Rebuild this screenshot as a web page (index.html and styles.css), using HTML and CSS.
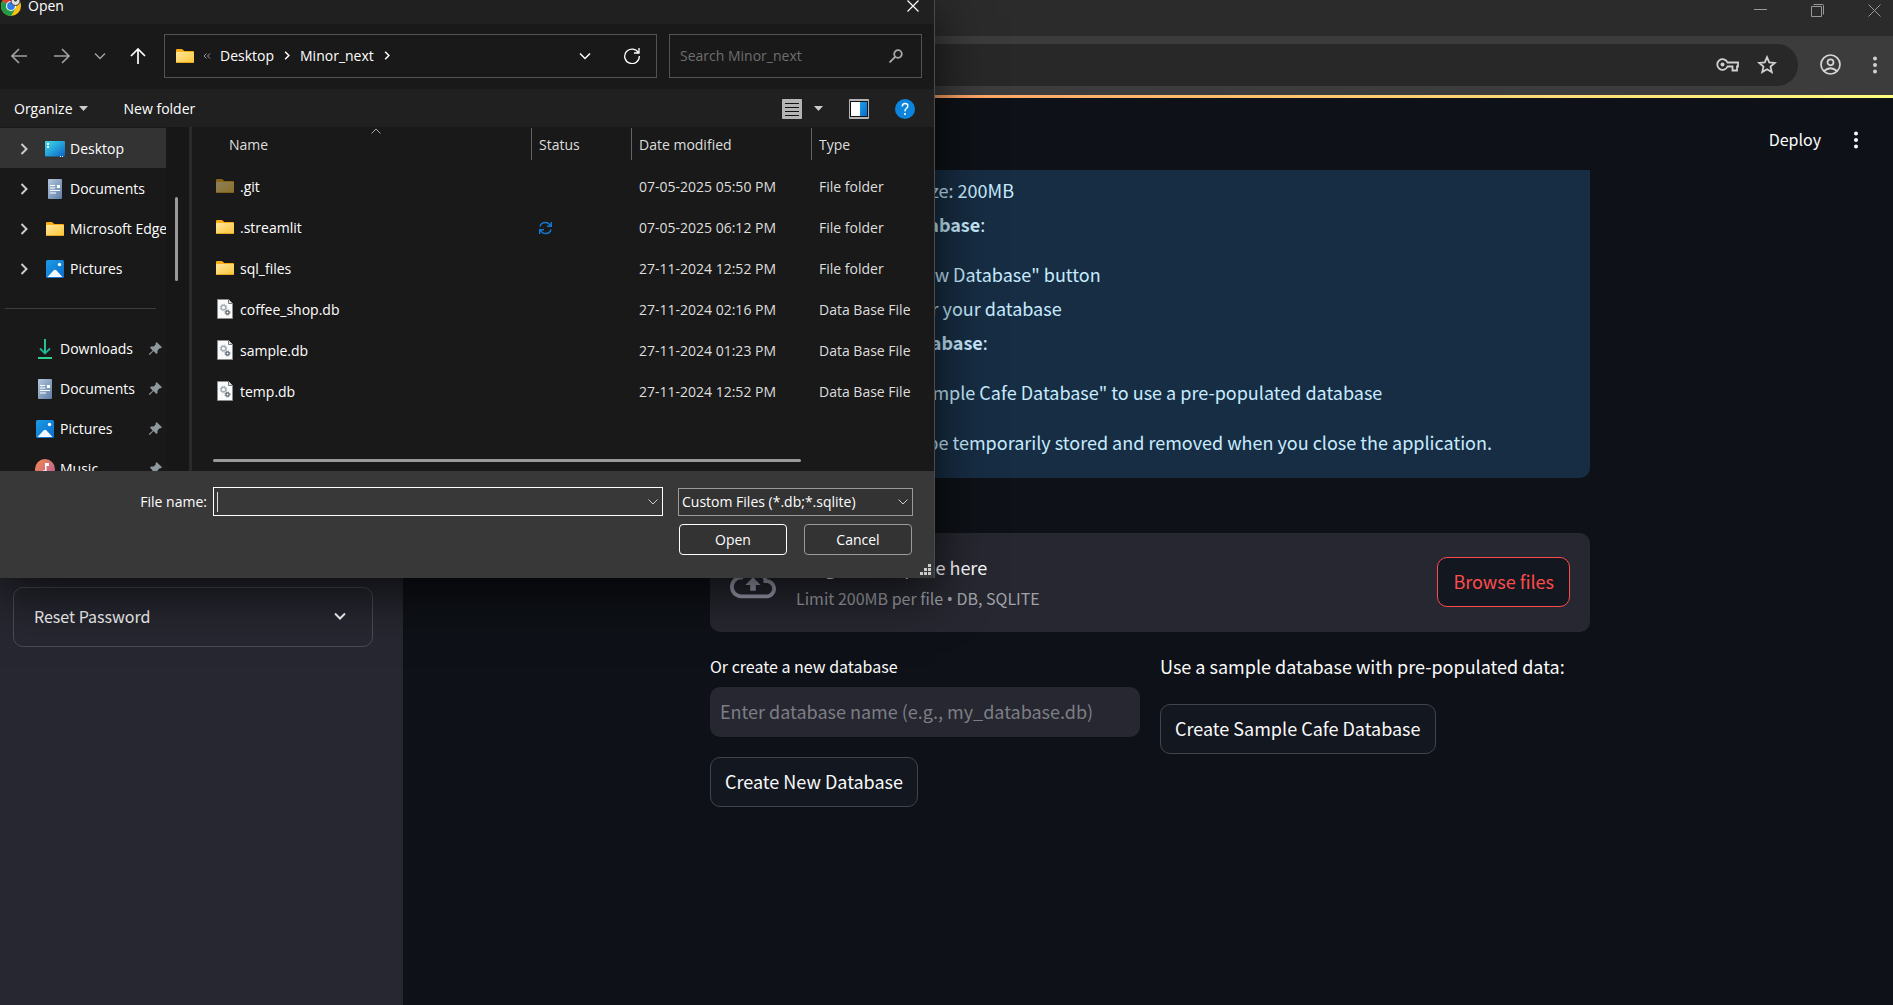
FILE: index.html
```html
<!DOCTYPE html>
<html lang="en">
<head>
<meta charset="utf-8">
<title>Database manager</title>
<link rel="stylesheet" href="styles.css">
</head>
<body>
<svg class="defs" width="0" height="0" aria-hidden="true">
  <defs>
    <linearGradient id="g-folder" x1="0" y1="0" x2="1" y2="1"><stop offset="0" stop-color="#ffe7a0"/><stop offset="1" stop-color="#fcc533"/></linearGradient>
    <linearGradient id="g-desk" x1="0" y1="0" x2="1" y2="1"><stop offset="0" stop-color="#3fdde8"/><stop offset="1" stop-color="#0a64c8"/></linearGradient>
    <linearGradient id="g-doc" x1="0" y1="0" x2="1" y2="1"><stop offset="0" stop-color="#b4c6dc"/><stop offset="1" stop-color="#5d7ea6"/></linearGradient>
    <linearGradient id="g-pic" x1="0" y1="0" x2="1" y2="1"><stop offset="0" stop-color="#1c9ce8"/><stop offset="1" stop-color="#0a6ccb"/></linearGradient>
    <linearGradient id="g-music" x1="0" y1="0" x2="1" y2="1"><stop offset="0" stop-color="#f58a4c"/><stop offset="1" stop-color="#b8589c"/></linearGradient>
    <linearGradient id="g-down" x1="0" y1="0" x2="0" y2="1"><stop offset="0" stop-color="#2fd08a"/><stop offset="1" stop-color="#1aa698"/></linearGradient>
    <symbol id="i-folder" viewBox="0 0 18 14"><path d="M0 1a1 1 0 0 1 1-1h5l2 2h9a1 1 0 0 1 1 1v3H0z" fill="#f8ac10"/><rect y="3" width="18" height="11" rx="1" fill="url(#g-folder)"/><path d="M0 2h7l1-1H0z" fill="#f8ac10"/><path d="M0 3h7l1-1H0z" fill="#fbb51c"/><path d="M1 13.500h16" stroke="#e9a820"/></symbol>
    <symbol id="i-desktop" viewBox="0 0 20 16"><rect width="20" height="15.500" rx="1" fill="url(#g-desk)"/><path d="M2 2h2v2H2zM2 5h2v2H2z" fill="#fff"/><path d="M15 15h1v1h-1zM17 15h1v1h-1z" fill="#d9f4ff"/></symbol>
    <symbol id="i-doc" viewBox="0 0 14 20"><rect width="14" height="20" rx="1" fill="url(#g-doc)"/><path d="M2 6.500h5M2 9h5M2 11.500h10M2 14h6" stroke="#fff" stroke-width="1.200"/><rect x="9" y="6" width="3" height="3" fill="#fff"/></symbol>
    <symbol id="i-pic" viewBox="0 0 18 18"><rect width="18" height="18" rx="1.500" fill="url(#g-pic)"/><circle cx="13.500" cy="4.500" r="1.700" fill="#fff"/><path d="M1.500 17l6-6.500q1.500-1.500 3 0l6 6.500z" fill="#f2f8ff"/></symbol>
    <symbol id="i-down" viewBox="0 0 14 20"><path d="M7 0v14M2 9.500l5 5 5-5" fill="none" stroke="url(#g-down)" stroke-width="1.800"/><path d="M6.200 0h1.600v14H6.200z" fill="#2cc58d"/><path d="M0 18h14v2H0z" fill="#2bd291"/></symbol>
    <symbol id="i-music" viewBox="0 0 20 20"><circle cx="10" cy="10" r="10" fill="url(#g-music)"/><path d="M10 4h4v3h-2.500v6.500a2.300 2.300 0 1 1-1.500-2.100z" fill="#fff"/></symbol>
    <symbol id="i-pin" viewBox="0 0 13 13"><path d="M7.500 0l5.500 5.300-1.300.9-1 .1-2.200 2.200v2.500L7.300 12 4.500 9 1 12.700H0V12l3.700-3.500L1 5.700l1-1.200h2.600L6.700 2.400V1z" fill="#8d989f"/></symbol>
    <symbol id="i-db" viewBox="0 0 16 20"><path d="M.5.500h11l4 4v15H.5z" fill="#fafafa" stroke="#8c8c8c"/><path d="M11.500.500v4h4" fill="#ddd" stroke="#777"/><circle cx="6.500" cy="8.500" r="2.300" fill="none" stroke="#a3adb5" stroke-width="1.400"/><circle cx="6.500" cy="8.500" r="3.300" fill="none" stroke="#a3adb5" stroke-width="1" stroke-dasharray="1.300 1.300"/><circle cx="10.500" cy="13.500" r="1.600" fill="none" stroke="#59636b" stroke-width="1.200"/><circle cx="10.500" cy="13.500" r="2.500" fill="none" stroke="#59636b" stroke-width="1" stroke-dasharray="1 1"/></symbol>
    <symbol id="i-right" viewBox="0 0 8 12"><path d="M1.500 1l5 5-5 5" fill="none" stroke="currentColor" stroke-width="2"/></symbol>
    <symbol id="i-chev" viewBox="0 0 12 8"><path d="M1 1.500l5 5 5-5" fill="none" stroke="currentColor" stroke-width="1.500"/></symbol>
    <symbol id="i-arrow" viewBox="0 0 16 16"><path d="M16 8H1M8 1L1 8l7 7" fill="none" stroke="currentColor" stroke-width="1.700"/></symbol>
    <symbol id="i-dots" viewBox="0 0 6 18"><g fill="currentColor"><circle cx="3" cy="2.500" r="2"/><circle cx="3" cy="9" r="2"/><circle cx="3" cy="15.500" r="2"/></g></symbol>
  </defs>
</svg>

<div class="browser">
  <div class="tabstrip">
    <button class="bare" aria-label="Minimize"><svg width="13" height="13"><path d="M0 5.500h13" stroke="#9a9a9a"/></svg></button>
    <button class="bare" aria-label="Restore"><svg width="13" height="13" fill="none" stroke="#9a9a9a"><path d="M.5 2.500h10v10H.5z"/><path d="M2.500.500h9a1 1 0 0 1 1 1v9"/></svg></button>
    <button class="bare" aria-label="Close window"><svg width="13" height="13"><path d="M.5.500l12 12M12.500.500l-12 12" stroke="#9a9a9a"/></svg></button>
  </div>
  <div class="toolbar">
    <div class="omnibox">
      <button class="bare" aria-label="Passwords"><svg width="23" height="14" viewBox="0 0 23 14" fill="none" stroke="#d0d0d0" stroke-width="1.800"><path d="M11.500 4.500h10.500v4h-1v4h-4.500v-4h-5a5.300 5.300 0 1 1 0-4z"/><circle cx="6.500" cy="6.500" r="2" fill="#d0d0d0" stroke="none"/></svg></button>
      <button class="bare" aria-label="Bookmark"><svg width="20" height="19" viewBox="0 0 20 19" fill="none" stroke="#d0d0d0" stroke-width="1.800"><path d="M10 2.200l2.200 5.200 5.600.5-4.300 3.700 1.300 5.500L10 14.200l-4.800 2.900 1.300-5.500L2.200 7.900l5.600-.5z"/></svg></button>
    </div>
    <button class="bare" aria-label="Profile"><svg width="21" height="21" viewBox="0 0 21 21" fill="none" stroke="#d6d6d6" stroke-width="1.700"><circle cx="10.500" cy="10.500" r="9.500"/><circle cx="10.500" cy="8.300" r="3"/><path d="M4 17q6.500-5.500 13 0"/></svg></button>
    <button class="bare dim" aria-label="Browser menu"><svg width="6" height="18"><use href="#i-dots"/></svg></button>
  </div>
</div>

<div class="app">
  <aside class="sidebar">
    <details class="expander">
      <summary>Reset Password<svg width="12" height="8"><path d="M1 1.500l5 5 5-5" fill="none" stroke="#fff" stroke-width="2"/></svg></summary>
    </details>
  </aside>
  <main class="main">
    <header class="header">
      <button class="bare deploy">Deploy</button>
      <button class="bare" aria-label="Main menu"><svg width="6" height="18"><use href="#i-dots"/></svg></button>
    </header>
    <div class="block">
      <section class="info">
        <p class="sub">Maximum file size: 200MB</p>
        <p class="item"><b>Create a New Database</b>:</p>
        <p class="sub gap">Click "Create New Database" button</p>
        <p class="sub">Enter a name for your database</p>
        <p class="item"><b>Use a Sample Database</b>:</p>
        <p class="sub gap">Click "Create Sample Cafe Database" to use a pre-populated database</p>
        <p class="gap">Note: All databases will be temporarily stored and removed when you close the application.</p>
      </section>
      <section class="upload">
        <svg width="46" height="46" viewBox="0 0 24 24" aria-hidden="true"><path fill="#a3a8b8" d="M19.350 10.040C18.670 6.590 15.640 4 12 4 9.110 4 6.600 5.640 5.350 8.040 2.340 8.360 0 10.910 0 14c0 3.310 2.690 6 6 6h13c2.760 0 5-2.240 5-5 0-2.640-2.050-4.780-4.650-4.960zM19 18H6c-2.210 0-4-1.790-4-4s1.790-4 4-4h.71C7.370 7.690 9.480 6 12 6c3.040 0 5.500 2.460 5.500 5.500v.5H19c1.660 0 3 1.340 3 3s-1.340 3-3 3zM8 13h2.550v3h2.900v-3H16l-4-4z"/></svg>
        <div class="upload-text"><span>Drag and drop file here</span><small>Limit 200MB per file <span class="bullet">•</span> DB, SQLITE</small></div>
        <button class="btn red">Browse files</button>
      </section>
      <div class="columns">
        <div class="column">
          <label for="dbname">Or create a new database</label>
          <input id="dbname" class="text" type="text" placeholder="Enter database name (e.g., my_database.db)">
          <button class="btn">Create New Database</button>
        </div>
        <div class="column second">
          <p>Use a sample database with pre-populated data:</p>
          <button class="btn">Create Sample Cafe Database</button>
        </div>
      </div>
    </div>
  </main>
</div>

<div class="dialog" role="dialog" aria-label="Open">
  <div class="titlebar">
    <svg width="20" height="20" viewBox="0 0 20 20"><circle cx="10" cy="10" r="10" fill="#fbc116"/><path d="M10 10L1.340 5A10 10 0 0 1 18.660 5z" fill="#e33b2e"/><path d="M1.340 5A10 10 0 0 0 10 20l4.500-7.500L10 10z" fill="#229a48"/><circle cx="10" cy="10" r="5" fill="#fff"/><circle cx="10" cy="10" r="3.900" fill="#2f7de9"/><circle cx="14.500" cy="5" r="4.500" fill="#ddd" stroke="#333"/><circle cx="14.500" cy="4" r="1.500" fill="#333"/></svg>
    <span>Open</span>
    <button class="bare push" aria-label="Close"><svg width="12" height="12"><path d="M.5.500l11 11M11.500.500l-11 11" stroke="#fff" stroke-width="1.200"/></svg></button>
  </div>
  <div class="navbar">
    <div class="nav-buttons">
      <button class="bare" aria-label="Back"><svg class="grey" width="16" height="16"><use href="#i-arrow"/></svg></button>
      <button class="bare" aria-label="Forward"><svg class="grey flip" width="16" height="16"><use href="#i-arrow"/></svg></button>
      <button class="bare" aria-label="Recent"><svg class="grey" width="12" height="8"><use href="#i-chev"/></svg></button>
      <button class="bare" aria-label="Up"><svg class="up" width="16" height="16"><use href="#i-arrow"/></svg></button>
    </div>
    <div class="address">
      <svg width="18" height="14"><use href="#i-folder"/></svg>
      <svg width="8" height="6" fill="none" stroke="#9a9a9a"><path d="M3.500.500L1 3l2.500 2.500M7 .5L4.500 3 7 5.500"/></svg>
      <a href="#desktop">Desktop</a>
      <svg class="sep" width="6" height="9"><use href="#i-right"/></svg>
      <a href="#minor">Minor_next</a>
      <svg class="sep" width="6" height="9"><use href="#i-right"/></svg>
      <button class="bare push" aria-label="Previous locations"><svg width="12" height="8"><use href="#i-chev"/></svg></button>
      <button class="bare" aria-label="Refresh"><svg width="16" height="17" viewBox="0 0 16 17" fill="none" stroke="#fff" stroke-width="1.300"><path d="M14.500 6A7.300 7.300 0 1 0 15.300 9M15 1v5h-5"/></svg></button>
    </div>
    <div class="search">
      <input type="search" aria-label="Search" placeholder="Search Minor_next">
      <svg width="14" height="14" fill="none" stroke="#a8a8a8" stroke-width="1.800"><circle cx="9" cy="5" r="3.800"/><path d="M6.500 7.500l-6 6"/></svg>
    </div>
  </div>
  <div class="commands">
    <button class="bare">Organize<svg width="9" height="5"><path d="M0 0h9L4.500 5z" fill="#ccc"/></svg></button>
    <button class="bare">New folder</button>
    <button class="bare push" aria-label="View"><svg width="20" height="20"><rect width="20" height="20" rx="1" fill="#b4b4b4"/><path d="M3 4.500h14M3 8.500h14M3 12.500h14M3 16.500h14" stroke="#111"/></svg><svg width="9" height="5"><path d="M0 0h9L4.500 5z" fill="#ccc"/></svg></button>
    <button class="bare" aria-label="Preview pane"><svg width="20" height="20"><rect width="20" height="20" rx="1" fill="#b4b4b4"/><path d="M1 2h18v16H1z" fill="#111"/><path d="M2 3h9v14H2z" fill="#fff"/><path d="M11 3h7v14h-7z" fill="url(#g-pic)"/></svg></button>
    <button class="bare" aria-label="Help"><svg width="20" height="20"><circle cx="10" cy="10" r="10" fill="#0c84dc"/><path d="M7.300 7.500q0-3 2.800-3t2.700 2.600q0 1.400-1.500 2.400T10 12.300" fill="none" stroke="#fff" stroke-width="1.500"/><circle cx="10" cy="15" r="1.100" fill="#fff"/></svg></button>
  </div>
  <div class="browse">
    <nav class="tree">
      <a class="selected" href="#d"><svg class="tw" width="8" height="12"><use href="#i-right"/></svg><i><svg width="20" height="16"><use href="#i-desktop"/></svg></i>Desktop</a>
      <a href="#docs"><svg class="tw" width="8" height="12"><use href="#i-right"/></svg><i><svg width="14" height="20"><use href="#i-doc"/></svg></i>Documents</a>
      <a href="#edge"><svg class="tw" width="8" height="12"><use href="#i-right"/></svg><i><svg width="18" height="14"><use href="#i-folder"/></svg></i>Microsoft Edge</a>
      <a href="#pics"><svg class="tw" width="8" height="12"><use href="#i-right"/></svg><i><svg width="18" height="18"><use href="#i-pic"/></svg></i>Pictures</a>
      <hr>
      <a class="quick" href="#q1"><i><svg width="14" height="20"><use href="#i-down"/></svg></i>Downloads<svg class="push" width="13" height="13"><use href="#i-pin"/></svg></a>
      <a class="quick" href="#q2"><i><svg width="14" height="20"><use href="#i-doc"/></svg></i>Documents<svg class="push" width="13" height="13"><use href="#i-pin"/></svg></a>
      <a class="quick" href="#q3"><i><svg width="18" height="18"><use href="#i-pic"/></svg></i>Pictures<svg class="push" width="13" height="13"><use href="#i-pin"/></svg></a>
      <a class="quick" href="#q4"><i><svg width="20" height="20"><use href="#i-music"/></svg></i>Music<svg class="push" width="13" height="13"><use href="#i-pin"/></svg></a>
    </nav>
    <div class="gutter"><div class="vthumb"></div></div>
    <div class="files">
      <table>
        <colgroup><col class="c-name"><col class="c-status"><col class="c-date"><col></colgroup>
        <thead><tr><th><svg class="sort" width="10" height="6" fill="none" stroke="#aaa"><path d="M.5 5.500L5 1l4.500 4.500"/></svg><span>Name</span></th><th><span>Status</span></th><th><span>Date modified</span></th><th><span>Type</span></th></tr></thead>
        <tbody>
          <tr><td><div><svg class="faded" width="18" height="14"><use href="#i-folder"/></svg>.git</div></td><td></td><td>07-05-2025 05:50 PM</td><td>File folder</td></tr>
          <tr><td><div><svg width="18" height="14"><use href="#i-folder"/></svg>.streamlit</div></td><td><svg width="13" height="14" viewBox="0 0 13 14" fill="none" stroke="#1278cf" stroke-width="1.400"><path d="M1 5.500Q2 1.500 6.500 1.500 10 1.500 11.500 5M12.300 1v4.300H8M12 8.500q-1 4-5.500 4Q3 12.500 1.500 9M.7 13V8.700H5"/></svg></td><td>07-05-2025 06:12 PM</td><td>File folder</td></tr>
          <tr><td><div><svg width="18" height="14"><use href="#i-folder"/></svg>sql_files</div></td><td></td><td>27-11-2024 12:52 PM</td><td>File folder</td></tr>
          <tr><td><div><svg width="18" height="20"><use href="#i-db"/></svg>coffee_shop.db</div></td><td></td><td>27-11-2024 02:16 PM</td><td>Data Base File</td></tr>
          <tr><td><div><svg width="18" height="20"><use href="#i-db"/></svg>sample.db</div></td><td></td><td>27-11-2024 01:23 PM</td><td>Data Base File</td></tr>
          <tr><td><div><svg width="18" height="20"><use href="#i-db"/></svg>temp.db</div></td><td></td><td>27-11-2024 12:52 PM</td><td>Data Base File</td></tr>
        </tbody>
      </table>
      <div class="hthumb"></div>
    </div>
  </div>
  <div class="footer">
    <label for="fname">File name:</label>
    <div class="combo"><input id="fname" type="text"><span class="caret"></span><svg width="10" height="6"><path d="M.5.500L5 5 9.500.500" fill="none" stroke="#ccc"/></svg></div>
    <div class="type"><select aria-label="File type"><option>Custom Files (*.db;*.sqlite)</option></select><svg width="10" height="6"><path d="M.5.500L5 5 9.500.500" fill="none" stroke="#ccc"/></svg></div>
    <div class="actions"><button class="win primary">Open</button><button class="win">Cancel</button></div>
  </div>
  <svg class="grip" width="11" height="11" fill="#ccc"><path d="M8 0h3v3H8zM8 4h3v3H8zM4 4h3v3H4zM8 8h3v3H8zM4 8h3v3H4zM0 8h3v3H0z"/></svg>
</div>
</body>
</html>
```
FILE: styles.css
```css
* { box-sizing: border-box; }
body {
  margin: 0;
  min-height: 100vh;
  display: flex;
  flex-direction: column;
  background: #0e1117;
  color: #fafafa;
  font-family: "Noto Sans CJK SC", sans-serif;
  font-size: 18px;
  line-height: 24px;
  overflow: hidden;
}
p { margin: 0; }
svg { display: block; flex: none; }
.defs { position: absolute; }
button, input, select { font: inherit; color: inherit; margin: 0; }
button { cursor: pointer; }
a { color: inherit; text-decoration: none; }
.bare { display: flex; align-items: center; padding: 0; border: 0; background: none; }
.push { margin-left: auto; }
.dim { color: #d0d0d0; }

/* browser frame */
.tabstrip {
  display: flex;
  justify-content: flex-end;
  align-items: flex-start;
  gap: 44px;
  height: 36px;
  padding: 4px 12px 0 0;
  background: #2b2b2b;
}
.toolbar {
  display: flex;
  align-items: center;
  height: 59px;
  padding: 0 15px 2px 160px;
  background: #3c3c3c;
}
.omnibox {
  flex: 1;
  display: flex;
  justify-content: flex-end;
  align-items: center;
  gap: 18px;
  height: 42px;
  margin-right: 22px;
  padding-right: 21px;
  border-radius: 21px;
  background: #282828;
}
.toolbar > .dim { margin-left: 31px; }

/* streamlit page */
.app {
  flex: 1;
  display: flex;
  border-top: 3px solid;
  border-image: linear-gradient(90deg, #ff4b4b, #fffd80) 1;
}
.sidebar { width: 403px; padding: 489px 30px 0 13px; background: #262730; }
.expander { border: 1px solid #4a4b55; border-radius: 10px; }
.expander summary {
  display: flex;
  align-items: center;
  justify-content: space-between;
  height: 58px;
  padding: 0 26px 2px 20px;
  list-style: none;
  font-size: 16px;
}
.main { flex: 1; }
.header {
  display: flex;
  justify-content: flex-end;
  align-items: center;
  gap: 32px;
  height: 72px;
  padding: 12px 34px 0 0;
}
.deploy { font-size: 16px; padding-bottom: 2px; }
.block { width: 880px; max-width: 100%; margin: 0 auto; position: relative; left: 2px; }
.info {
  padding: 3px 20px 19px;
  border-radius: 0 0 10px 10px;
  background: #172d43;
  color: #c7ebff;
  line-height: 34px;
}
.info .item { padding-left: 48px; }
.info .sub { padding-left: 70px; }
.info .gap { margin-top: 16px; }
.upload {
  display: flex;
  align-items: center;
  gap: 20px;
  height: 99px;
  margin-top: 55px;
  padding: 0 20px;
  border-radius: 10px;
  background: #262730;
}
.upload-text { flex: 1; display: flex; flex-direction: column; gap: 7px; }
.upload-text small { font-size: 16px; color: #a1a2a8; }
.bullet { font-family: "Noto Sans", sans-serif; }
.btn {
  height: 50px;
  padding: 0 14px 2px;
  border: 1px solid #41444c;
  border-radius: 10px;
  background: #131720;
}
.btn.red { border-color: #ff4b4b; color: #ff4b4b; padding: 0 15px 2px; margin-bottom: 2px; }
.columns { display: grid; grid-template-columns: 1fr 1fr; gap: 20px; margin-top: 22px; }
.column { display: flex; flex-direction: column; align-items: flex-start; }
.column label { font-size: 16px; margin-bottom: 9px; }
.text {
  width: 100%;
  height: 50px;
  margin-bottom: 20px;
  padding: 0 10px 2px;
  border: 0;
  border-radius: 10px;
  background: #262730;
}
.text::placeholder { color: #7d7e84; opacity: 1; }
.column p { margin-bottom: 26px; }

/* file picker window */
.dialog {
  position: absolute;
  left: 0;
  top: 0;
  width: 935px;
  border-right: 1px solid #4a4a4a;
  background: #191919;
  color: #fff;
  font-family: "Open Sans", sans-serif;
  font-size: 14px;
  line-height: 20px;
  box-shadow: 0 14px 50px rgba(0, 0, 0, .7);
}
.titlebar {
  display: flex;
  align-items: center;
  gap: 7px;
  height: 24px;
  padding: 0 15px 13px 1px;
  background: #202020;
}
.navbar { display: flex; align-items: center; height: 65px; padding: 0 12px 2px 11px; }
.nav-buttons { display: flex; align-items: center; gap: 24px; width: 153px; }
.nav-buttons .bare:first-child { width: 19px; }
.grey { color: #a0a0a0; }
.flip { transform: scaleX(-1); }
.up { transform: rotate(90deg); }
.address, .search { display: flex; align-items: center; height: 44px; border: 1px solid #535353; }
.address { flex: 1; padding: 0 16px 0 11px; gap: 9px; }
.address .sep { margin: 0 1px; }
.address .push { margin-right: 24px; }
.search { width: 253px; margin-left: 12px; padding: 0 18px 0 10px; }
.search input { flex: 1; min-width: 0; padding: 0; border: 0; background: none; outline: 0; }
.search input::placeholder { color: #6e6e6e; opacity: 1; }
.commands {
  display: flex;
  align-items: center;
  gap: 26px;
  height: 38px;
  padding: 1px 19px 0 14px;
  background: #202020;
}
.commands .bare { gap: 6px; }
.commands .bare:nth-child(2) { margin-left: 10px; }
.commands .push { gap: 12px; margin-left: auto; }
.browse { display: flex; height: 344px; overflow: hidden; }
.tree { width: 166px; overflow: hidden; padding-top: 1px; }
.tree a {
  display: flex;
  align-items: center;
  height: 40px;
  padding: 1px 4px 0 20px;
  white-space: nowrap;
}
.tree .selected { background: #333; }
.tree i { display: flex; justify-content: center; width: 20px; margin: 0 5px 0 17px; flex: none; }
.tree .quick { padding-left: 35px; }
.tree .quick i { margin-left: 0; }
.tw { color: #ccc; }
.tree hr { height: 1px; margin: 20px 10px 19px 5px; border: 0; background: #3d3d3d; }
.gutter { width: 26px; padding: 70px 0 0 9px; border-right: 3px solid #2a2a2a; background: #171717; }
.vthumb { width: 3px; height: 84px; border-radius: 2px; background: #9a9a9a; }
.files { flex: 1; display: flex; flex-direction: column; justify-content: space-between; }
table { width: 100%; table-layout: fixed; border-collapse: collapse; color: #dedede; }
.c-name { width: 339px; }
.c-status { width: 100px; }
.c-date { width: 180px; }
th { position: relative; height: 39px; padding: 1px 0 6px; text-align: left; font-weight: 400; vertical-align: top; }
th span { display: block; height: 32px; padding-left: 7px; line-height: 34px; border-left: 1px solid #636363; }
th:first-child span { padding-left: 36px; border-color: transparent; }
.sort { position: absolute; left: 179px; top: 1px; }
td { height: 41px; padding: 0 0 0 8px; }
td:first-child { padding-left: 24px; color: #fff; }
td div { display: flex; align-items: center; gap: 6px; }
td div svg { margin-bottom: 2px; }
.faded { opacity: .5; }
.hthumb { width: 588px; height: 3px; margin: 0 0 9px 21px; border-radius: 2px; background: #9a9a9a; }
.footer {
  display: grid;
  grid-template-columns: 207px 450px 236px;
  column-gap: 6px;
  row-gap: 8px;
  align-items: center;
  height: 107px;
  padding: 16px 0 23px;
  background: #383838;
}
.footer label { text-align: right; }
.combo, .type { position: relative; display: flex; align-items: center; }
.combo input, .type select {
  appearance: none;
  width: 100%;
  height: 29px;
  padding: 0 24px 0 3px;
  border: 1px solid #fff;
  border-radius: 0;
  outline: 0;
  background: #383838;
}
.type { margin-left: 9px; width: 235px; }
.type select { height: 28px; border-color: #9b9b9b; background: #333; }
.combo svg, .type svg { position: absolute; right: 5px; pointer-events: none; }
.caret { position: absolute; left: 4px; width: 1px; height: 20px; background: #ddd; }
.actions { grid-column: 3; display: flex; gap: 17px; padding-left: 10px; }
.win { width: 108px; flex: none; height: 31px; padding: 0; border: 1px solid #9b9b9b; border-radius: 4px; background: #333; }
.win.primary { border-color: #fff; }
.grip { position: absolute; right: 3px; bottom: 3px; }
```
